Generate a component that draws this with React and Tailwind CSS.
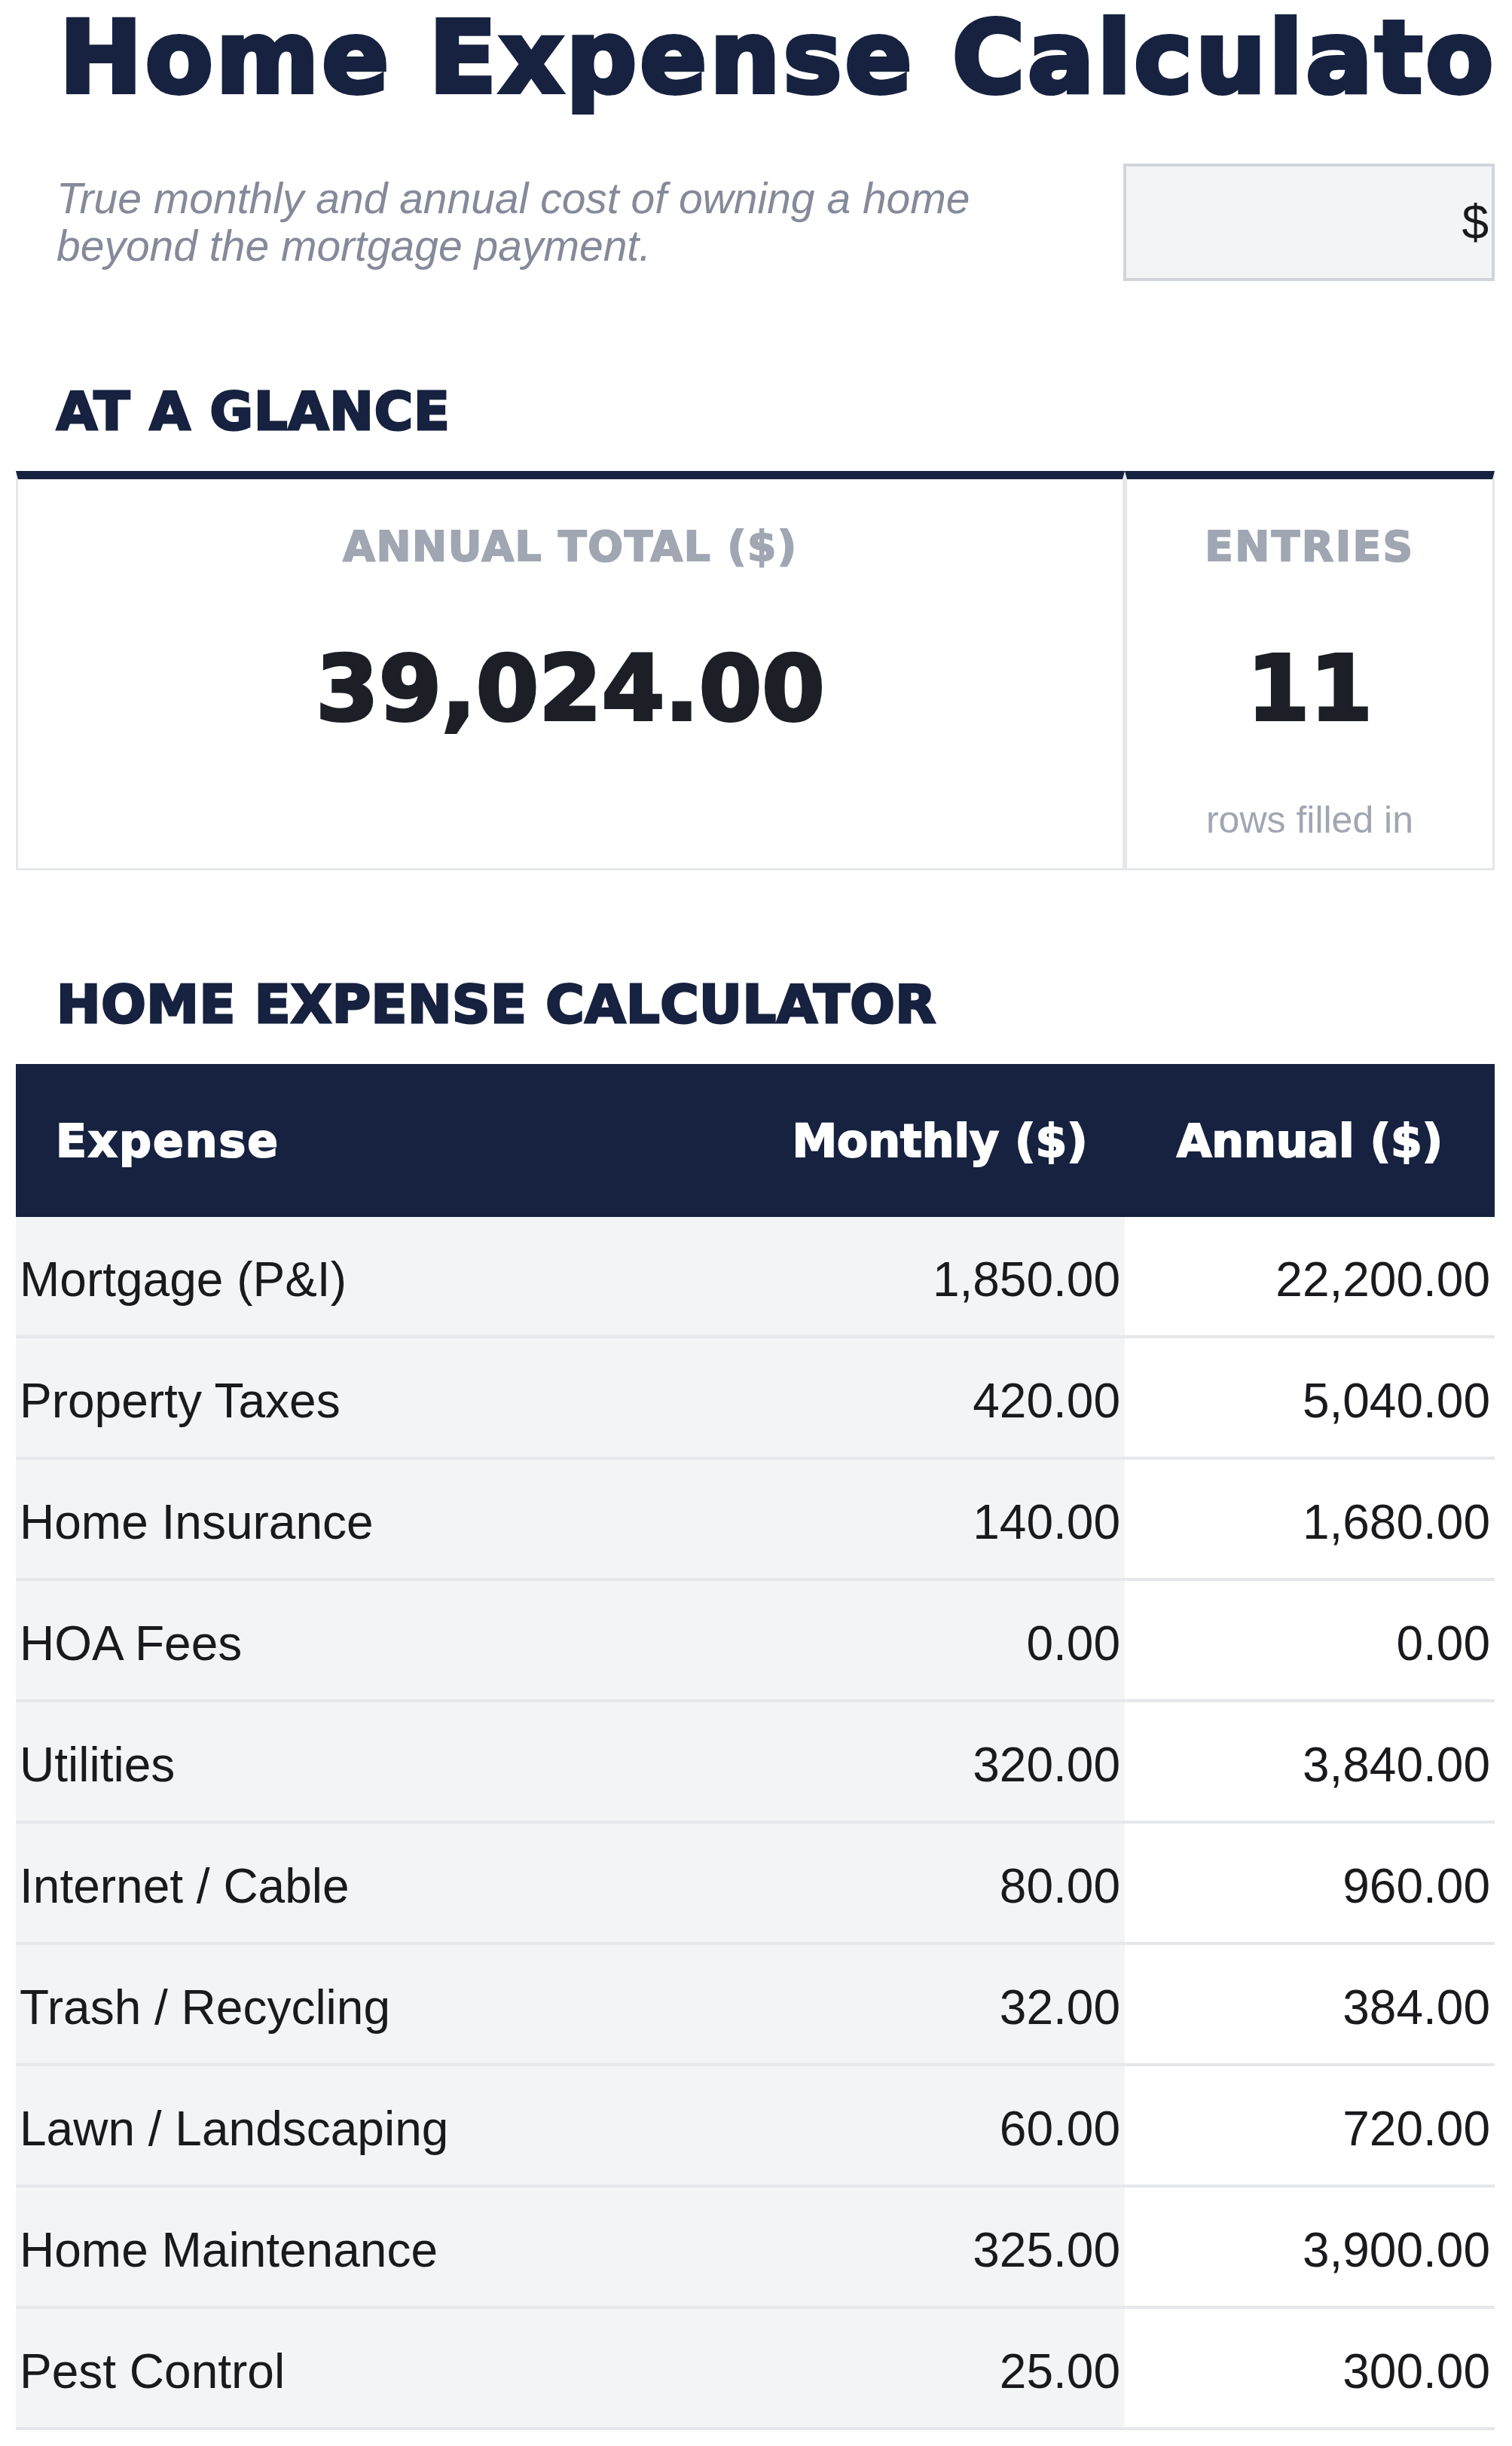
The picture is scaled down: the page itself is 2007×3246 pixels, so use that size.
import React from "react";

const rows = [
  ["Mortgage (P&I)", "1,850.00", "22,200.00"],
  ["Property Taxes", "420.00", "5,040.00"],
  ["Home Insurance", "140.00", "1,680.00"],
  ["HOA Fees", "0.00", "0.00"],
  ["Utilities", "320.00", "3,840.00"],
  ["Internet / Cable", "80.00", "960.00"],
  ["Trash / Recycling", "32.00", "384.00"],
  ["Lawn / Landscaping", "60.00", "720.00"],
  ["Home Maintenance", "325.00", "3,900.00"],
  ["Pest Control", "25.00", "300.00"],
];

export default function App() {
  return (
    <div className="min-h-[3246px] w-full bg-white pl-[21px] pr-[23px] font-['Liberation_Sans',Arial,sans-serif]">
      <h1 className="overflow-x-clip whitespace-nowrap pt-[11px] pl-[58px] font-['DejaVu_Sans',sans-serif] text-[131px] font-bold leading-none tracking-[4px] text-[#16223f] [-webkit-text-stroke:6px_#16223f]">
        Home Expense Calculator
      </h1>

      <div className="mt-[75px] flex items-center justify-between">
        <p className="w-[1320px] pl-[54px] text-[57px] italic leading-[63px] text-[#858a9a]">
          True monthly and annual cost of owning a home beyond the mortgage payment.
        </p>
        <div className="flex h-[156px] w-[493px] items-center justify-end border-4 border-[#d1d5db] bg-[#f3f4f6] pr-[4px] text-[64px] leading-none text-[#1a1a1a]">
          $
        </div>
      </div>

      <h2 className="mt-[138px] pl-[54px] font-['DejaVu_Sans',sans-serif] text-[70px] font-bold leading-none tracking-[0.012em] text-[#16223f] [-webkit-text-stroke:3px_#16223f]">
        AT A GLANCE
      </h2>

      <div className="mt-[44px] flex">
        <div className="flex w-[1472px] flex-col items-center border-[3px] border-[#e5e7eb] border-t-[11px] border-t-[#16223f] pt-[62px] pb-[39px]">
          <div className="font-['DejaVu_Sans',sans-serif] text-[55px] font-bold leading-none tracking-[0.03em] text-[#a0a6b2] [-webkit-text-stroke:2px_#a0a6b2]">
            ANNUAL TOTAL ($)
          </div>
          <div className="mt-[101px] font-['DejaVu_Sans',sans-serif] text-[120px] font-bold leading-none text-[#1c1f26] [-webkit-text-stroke:4px_#1c1f26]">
            39,024.00
          </div>
        </div>
        <div className="flex flex-1 flex-col items-center border-[3px] border-[#e5e7eb] border-t-[11px] border-t-[#16223f] pt-[62px] pb-[39px]">
          <div className="font-['DejaVu_Sans',sans-serif] text-[55px] font-bold leading-none tracking-[0.045em] text-[#a0a6b2] [-webkit-text-stroke:2px_#a0a6b2]">
            ENTRIES
          </div>
          <div className="mt-[101px] font-['DejaVu_Sans',sans-serif] text-[120px] font-bold leading-none text-[#1c1f26] [-webkit-text-stroke:4px_#1c1f26]">
            11
          </div>
          <div className="mt-[89px] text-[50px] leading-none text-[#a0a6b2]">rows filled in</div>
        </div>
      </div>

      <h2 className="mt-[143px] pl-[54px] font-['DejaVu_Sans',sans-serif] text-[70px] font-bold leading-none tracking-[0.008em] text-[#16223f] [-webkit-text-stroke:3px_#16223f]">
        HOME EXPENSE CALCULATOR
      </h2>

      <div className="mt-[44px]">
        <div className="grid h-[203px] grid-cols-[981px_491px_491px] items-center bg-[#16223f] font-['DejaVu_Sans',sans-serif] text-[60px] font-bold leading-none text-white [-webkit-text-stroke:2px_#ffffff]">
          <div className="pl-[53px] tracking-[0.035em]">Expense</div>
          <div className="text-center">Monthly ($)</div>
          <div className="text-center">Annual ($)</div>
        </div>
        {rows.map(([name, monthly, annual]) => (
          <div
            key={name}
            className="grid h-[161px] grid-cols-[981px_491px_491px] border-b-4 border-[#e5e7eb] text-[64px] leading-none text-[#1a1a1e]"
          >
            <div className="flex items-center bg-[#f3f4f6] pt-[8px] pl-[5px]">{name}</div>
            <div className="flex items-center justify-end bg-[#f3f4f6] pt-[8px] pr-[6px]">{monthly}</div>
            <div className="flex items-center justify-end bg-white pt-[8px] pr-[6px]">{annual}</div>
          </div>
        ))}
      </div>
    </div>
  );
}
